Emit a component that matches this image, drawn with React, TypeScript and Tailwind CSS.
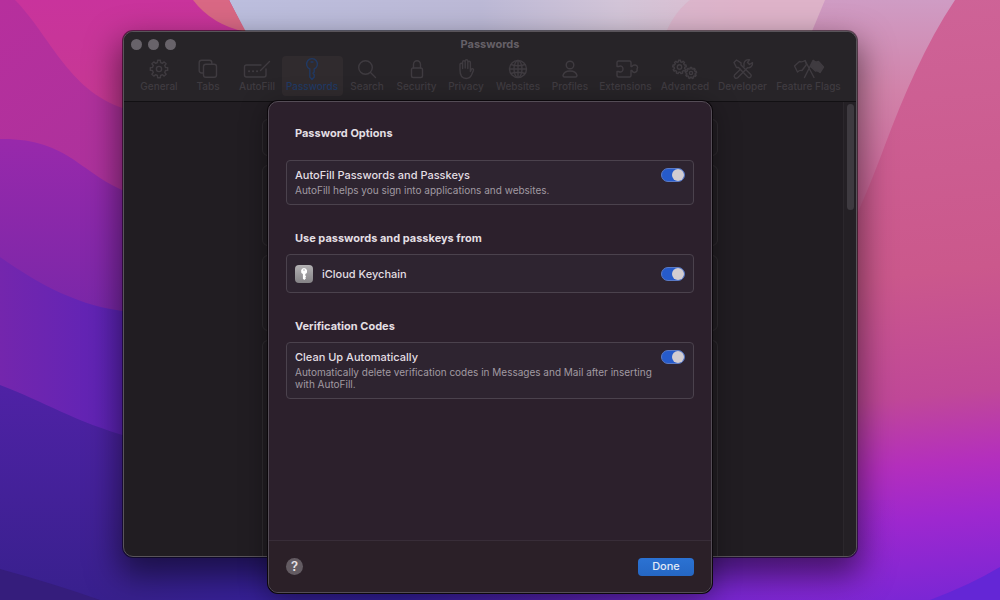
import React, { useState } from "react";

function gearPath(cx: number, cy: number, outer: number, inner: number, teeth: number) {
  const points: string[] = [];
  const step = (Math.PI * 2) / teeth;
  const at = (r: number, a: number) =>
    `${(cx + r * Math.cos(a)).toFixed(2)} ${(cy + r * Math.sin(a)).toFixed(2)}`;
  for (let i = 0; i < teeth; i++) {
    const a = i * step - Math.PI / 2;
    points.push(at(inner, a - step * 0.3), at(outer, a - step * 0.2), at(outer, a + step * 0.2), at(inner, a + step * 0.3));
  }
  return `M${points.join("L")}Z`;
}

const icons: Record<string, React.ReactNode> = {
  General: (
    <>
      <path d={gearPath(12, 11, 8.800, 6.700, 8)} />
      <circle cx="12" cy="11" r="2.6" />
    </>
  ),
  Tabs: (
    <>
      <path d="M7 15H5.500A2.300 2.300 0 0 1 3.200 12.700V4.500A2.300 2.300 0 0 1 5.500 2.200H13.500A2.300 2.300 0 0 1 15.800 4.500V6" />
      <rect x="7.500" y="6.300" width="13" height="13" rx="2.300" />
    </>
  ),
  AutoFill: (
    <>
      <path d="M16 7H1.500A2 2 0 0 0 -.5 9V17A2 2 0 0 0 1.500 19H19A2 2 0 0 0 21 17V11" />
      <path d="M15.500 12.500L24.500 3.500" />
      <path d="M4 13.300h.1M8 13.300h.1M12 13.300h.1" strokeWidth="2" />
    </>
  ),
  Passwords: (
    <>
      <path d="M9.800 11A5.400 5.400 0 1 1 14.200 11V14L13 15.300L14.200 16.700V19L12 21.500L9.800 19Z" />
      <path d="M11 4h2" />
    </>
  ),
  Search: (
    <>
      <circle cx="10.500" cy="9.500" r="6.800" />
      <path d="M15.500 14.500L20.500 19.500" />
    </>
  ),
  Security: (
    <>
      <rect x="6.500" y="10" width="11" height="9.500" rx="1.800" />
      <path d="M8.500 10V6.500A3.500 3.800 0 0 1 15.500 6.500V10" />
    </>
  ),
  Privacy: (
    <path d="M6 12V6.500a1.300 1.300 0 0 1 2.600 0V10.500V4a1.300 1.300 0 0 1 2.600 0V10V3a1.300 1.300 0 0 1 2.600 0V10.500V4.500a1.300 1.300 0 0 1 2.600 0V13.500L17.500 11a1.200 1.200 0 0 1 2 1.200L17.500 17a6 6 0 0 1-5.300 3.500C8 20.500 6 17.500 6 12Z" />
  ),
  Websites: (
    <>
      <circle cx="12" cy="11" r="8.500" />
      <ellipse cx="12" cy="11" rx="4" ry="8.500" />
      <path d="M12 2.500V19.500M3.500 11H20.500M5 6.500Q12 9 19 6.500M5 15.500Q12 13 19 15.500" />
    </>
  ),
  Profiles: (
    <>
      <circle cx="12" cy="7" r="3.800" />
      <path d="M6.500 19H17.500A1.500 1.500 0 0 0 19 17.500C18.300 14.600 15.500 13 12 13S5.700 14.600 5 17.500A1.500 1.500 0 0 0 6.500 19Z" />
    </>
  ),
  Extensions: (
    <path d="M4.500 3H15.500A1.500 1.500 0 0 1 17 4.500V8.500H18C18.600 7.300 19.500 7 20.500 7A2.500 2.500 0 0 1 23 11A2.500 2.500 0 0 1 18 12.500H17V17.500A1.500 1.500 0 0 1 15.500 19H4.500A1.500 1.500 0 0 1 3 17.500V13.500H4.500C7.500 15 9 13 9 11S7.500 7 4.500 8.500H3V4.500A1.500 1.500 0 0 1 4.500 3Z" />
  ),
  Advanced: (
    <>
      <path d={gearPath(6.500, 9, 6.800, 5.300, 9)} />
      <circle cx="6.500" cy="9" r="2.200" />
      <path d={gearPath(18, 15, 5.600, 4.300, 9)} />
      <circle cx="18" cy="15" r="1.600" />
    </>
  ),
  Developer: (
    <>
      <path d="M3 4.500L5.500 2L10 4.800V7L19.800 16.500A2 2 0 0 1 17 19.300L7.500 9.500H5.500Z" />
      <path d="M13 8.500V5.500A4.500 4.500 0 0 1 18.500 1.800L16.500 4.500L18.500 6.500L21.500 4.700A4.500 4.500 0 0 1 16.500 9.800L6.500 20A2.200 2.200 0 0 1 3.500 17L9.500 11.200" />
    </>
  ),
  "Feature Flags": (
    <>
      <path d="M-2.500 8L2.500 3.500Q5 4.500 8 2.500L9.500 6.500L5 12.500Q2.500 12 .5 14Z" />
      <path d="M8 2.500L17 19.500M16 2.500L7.500 19.500" />
      <path d="M16.500 2.500Q18.500 5 21.500 3.500L26.500 9L23 14.500Q20.500 12.500 18.500 13L13.500 8.500Z" fill="currentColor" />
    </>
  ),
};

const tabs = [
  { name: "General", width: "w-[49px]" },
  { name: "Tabs", width: "w-[49px]" },
  { name: "AutoFill", width: "w-[49px]" },
  { name: "Passwords", width: "w-[61px]" },
  { name: "Search", width: "w-[49px]" },
  { name: "Security", width: "w-[50px]" },
  { name: "Privacy", width: "w-[49px]" },
  { name: "Websites", width: "w-[55px]" },
  { name: "Profiles", width: "w-[49px]" },
  { name: "Extensions", width: "w-[62px]" },
  { name: "Advanced", width: "w-[57px]" },
  { name: "Developer", width: "w-[58px]" },
  { name: "Feature Flags", width: "w-[74px]" },
];

function Wallpaper() {
  return (
    <svg aria-hidden="true" className="absolute inset-0 h-full w-full" viewBox="0 0 1000 600" preserveAspectRatio="none">
      <defs>
        <linearGradient id="sky" x1="0" x2="1" y1="0" y2="0">
          <stop offset="0.2" stopColor="#bcbfdf" />
          <stop offset="0.48" stopColor="#bcb9d6" />
          <stop offset="0.62" stopColor="#d3c5d8" />
          <stop offset="0.75" stopColor="#dfbccf" />
        </linearGradient>
        <linearGradient id="lilac" x1="0" x2="0" y1="0" y2="1">
          <stop offset="0" stopColor="#cf9cc4" />
          <stop offset="0.3" stopColor="#d283aa" />
          <stop offset="1" stopColor="#c84c8a" />
        </linearGradient>
        <linearGradient id="rose" gradientUnits="userSpaceOnUse" x1="880" x2="940" y1="0" y2="610">
          <stop offset="0" stopColor="#ce6397" />
          <stop offset="0.45" stopColor="#cb588c" />
          <stop offset="0.65" stopColor="#c04898" />
          <stop offset="0.76" stopColor="#b42fbd" />
          <stop offset="0.85" stopColor="#9e28cf" />
          <stop offset="1" stopColor="#7626d5" />
        </linearGradient>
        <linearGradient id="magenta" x1="0" x2="0.6" y1="0" y2="1">
          <stop offset="0" stopColor="#b72f9d" />
          <stop offset="1" stopColor="#a5349b" />
        </linearGradient>
        <linearGradient id="hotpink" x1="0" x2="0" y1="0" y2="1">
          <stop offset="0" stopColor="#c9339c" />
          <stop offset="1" stopColor="#c63993" />
        </linearGradient>
        <linearGradient id="purple" x1="0" x2="0" y1="0" y2="1">
          <stop offset="0" stopColor="#9829ab" />
          <stop offset="1" stopColor="#7727a8" />
        </linearGradient>
        <linearGradient id="violet" x1="0" x2="1" y1="0" y2="0">
          <stop offset="0" stopColor="#7426ad" />
          <stop offset="1" stopColor="#5b23b8" />
        </linearGradient>
        <linearGradient id="indigo" x1="0" x2="0" y1="0" y2="1">
          <stop offset="0" stopColor="#4f22a5" />
          <stop offset="1" stopColor="#38208d" />
        </linearGradient>
        <linearGradient id="floor" x1="0" x2="1" y1="0" y2="0">
          <stop offset="0" stopColor="#37208c" />
          <stop offset="0.35" stopColor="#3420a0" />
          <stop offset="0.55" stopColor="#5522b0" />
          <stop offset="0.75" stopColor="#7627cf" />
          <stop offset="1" stopColor="#8426d3" stopOpacity="0" />
        </linearGradient>
      </defs>
      <rect width="1000" height="600" fill="url(#sky)" />
      <path d="M690 0Q672 14 663 40H830V0Z" fill="#dda9c3" opacity="0.5" />
      <path d="M825 0L800 60V300H1000V0Z" fill="url(#lilac)" />
      <path d="M955 0C925 45 904 95 885 145C872 180 862 205 840 250V400H700V600H1000V0Z" fill="url(#rose)" />
      <path d="M130 500H900V600H130Z" fill="url(#floor)" />
      <path d="M930 600Q970 585 1000 567V600Z" fill="#6426d6" />
      <path d="M0 0H229L262 65V320H0Z" fill="url(#magenta)" />
      <path d="M15 0C50 35 70 95 130 110H270L229 0Z" fill="url(#hotpink)" />
      <path d="M193 0Q212 25 246 32L229 0Z" fill="#d96884" />
      <path d="M0 139C70 138 80 175 130 193V330H0Z" fill="url(#purple)" />
      <path d="M0 257C40 285 80 307 130 312V450H0Z" fill="url(#violet)" />
      <path d="M0 385C45 402 75 422 130 437V600H0Z" fill="url(#indigo)" />
      <path d="M0 569Q55 584 100 600H0Z" fill="#351d7c" />
    </svg>
  );
}

function Toggle({ id }: { id: string }) {
  const [on, setOn] = useState(true);
  return (
    <input
      id={id}
      type="checkbox"
      role="switch"
      checked={on}
      onChange={(e) => setOn(e.target.checked)}
      className="flex h-[14px] w-6 shrink-0 appearance-none items-center rounded-full border border-[#5a79c4] bg-[#5a535c] before:block before:size-3 before:rounded-full before:bg-[#d2cdd1] checked:justify-end checked:bg-[#265bcb]"
    />
  );
}

const card = "rounded border border-[#4b424d] bg-[#2e2430] px-2";
const heading = "px-[9px] text-[11px] leading-4 font-bold text-[#e3dfe3]";
const title = "block text-[11px] leading-[14px] font-medium text-[#e3dfe3]";
const note = "mt-0.5 text-[10px] leading-3 text-[#a19aa2]";

function KeychainIcon() {
  return (
    <svg aria-hidden="true" viewBox="0 0 18 18" className="size-[18px] shrink-0">
      <defs>
        <linearGradient id="key-tile" x1="0" x2="0" y1="0" y2="1">
          <stop offset="0" stopColor="#b3b1b3" />
          <stop offset="1" stopColor="#858386" />
        </linearGradient>
      </defs>
      <rect width="18" height="18" rx="4" fill="url(#key-tile)" />
      <path
        fill="#fff"
        fillRule="evenodd"
        d="M9 3a3.200 3.200 0 0 1 1.300 6.100V10.500L11.200 11.400L10.300 12.300L11 13.200L9.300 15L7.900 13.800V9.100A3.200 3.200 0 0 1 9 3ZM9 4.200a.8.8 0 1 0 0 1.600a.8.8 0 1 0 0-1.600Z"
      />
    </svg>
  );
}

function Sheet() {
  return (
    <section
      role="dialog"
      aria-labelledby="sheet-title"
      className="absolute top-[69px] -bottom-[37px] left-1/2 flex w-[444px] -translate-x-1/2 flex-col overflow-hidden rounded-[10px] border border-[#544c56] bg-[#2c202c] shadow-[0_0_0_1px_#0c080c,0_6px_28px_rgba(0,0,0,0.4)]"
    >
      <div className="flex-1 px-[17px] pt-[23px]">
        <h2 id="sheet-title" className={heading}>Password Options</h2>
        <div className={`${card} mt-[19px] flex items-start justify-between pt-[7px] pb-2`}>
          <div>
            <label htmlFor="autofill" className={title}>AutoFill Passwords and Passkeys</label>
            <p className={note}>AutoFill helps you sign into applications and websites.</p>
          </div>
          <Toggle id="autofill" />
        </div>

        <h3 className={`${heading} mt-[25px]`}>Use passwords and passkeys from</h3>
        <div className={`${card} mt-2 flex h-[39px] items-center`}>
          <KeychainIcon />
          <label htmlFor="keychain" className={`${title} ml-[9px] flex-1`}>iCloud Keychain</label>
          <Toggle id="keychain" />
        </div>

        <h3 className={`${heading} mt-[25px]`}>Verification Codes</h3>
        <div className={`${card} mt-2 flex items-start justify-between pt-[7px] pb-2`}>
          <div className="max-w-[364px]">
            <label htmlFor="cleanup" className={title}>Clean Up Automatically</label>
            <p className={note}>
              Automatically delete verification codes in Messages and Mail after inserting with AutoFill.
            </p>
          </div>
          <Toggle id="cleanup" />
        </div>
      </div>
      <footer className="flex h-[52px] items-center justify-between border-t border-[#382d38] bg-[#2b2028] px-[17px]">
        <button type="button" aria-label="Help" className="flex size-[17px] items-center justify-center rounded-full bg-[#635b62] text-[13px] leading-none font-semibold text-[#e6e2e5]">
          ?
        </button>
        <button type="button" className="h-[18px] w-14 rounded bg-linear-to-b from-[#2b72d3] to-[#2567c4] text-[11px] leading-none font-medium text-[#e2eaf6]">
          Done
        </button>
      </footer>
    </section>
  );
}

export default function App() {
  return (
    <main className="relative flex min-h-screen flex-col overflow-hidden pt-[31px] pr-[143px] pb-[43px] pl-[123px] font-['Inter','Liberation_Sans',sans-serif]">
      <Wallpaper />
      <div className="relative flex flex-1 flex-col rounded-[10px] border border-[#59545a] bg-[#211d22] shadow-[0_0_0_1px_rgba(0,0,0,0.5),0_14px_32px_4px_rgba(0,0,0,0.5)]">
        <header className="rounded-t-[9px] border-b border-[#121013] bg-[#272428]">
          <div className="grid h-6 grid-cols-[1fr_auto_1fr] items-center px-[7px]">
            <div className="flex gap-1.5">
              <button type="button" aria-label="Close" className="size-[11px] rounded-full bg-[#68636a]" />
              <button type="button" aria-label="Minimize" className="size-[11px] rounded-full bg-[#68636a]" />
              <button type="button" aria-label="Zoom" className="size-[11px] rounded-full bg-[#68636a]" />
            </div>
            <h1 className="text-[11px] leading-4 font-bold text-[#656067]">Passwords</h1>
          </div>
          <nav className="flex justify-center pb-[5px]">
            {tabs.map((tab) => (
              <button
                key={tab.name}
                type="button"
                className={`${tab.width} flex h-10 flex-col items-center rounded pt-0.5 ${
                  tab.name === "Passwords" ? "bg-[#302b2e] text-[#203963]" : "text-[#3f3b40]"
                }`}
              >
                <svg
                  aria-hidden="true"
                  viewBox="0 0 24 24"
                  className="size-6 overflow-visible"
                  fill="none"
                  stroke="currentColor"
                  strokeWidth="1.4"
                  strokeLinecap="round"
                  strokeLinejoin="round"
                >
                  {icons[tab.name]}
                </svg>
                <span className="text-[10px] leading-2 font-medium whitespace-nowrap">{tab.name}</span>
              </button>
            ))}
          </nav>
        </header>
        <div className="flex flex-1">
          <div className="ml-3 flex flex-1 flex-col items-center pt-[17px]">
            <div className="flex w-[456px] flex-1 flex-col gap-[9px]">
              <div className="h-[37px] rounded-md border border-[#2f2b30]" />
              <div className="h-[81px] rounded-md border border-[#2f2b30]" />
              <div className="h-[76px] rounded-md border border-[#2f2b30]" />
              <div className="flex-1 rounded-t-md border border-b-0 border-[#2f2b30]" />
            </div>
          </div>
          <div className="w-[13px] rounded-br-[9px] border-l border-[#2b272c] bg-[#242025] pt-0.5 pl-[3px]">
            <div className="h-[106px] w-[7px] rounded-full bg-[#3e3a40]" />
          </div>
        </div>
        <Sheet />
      </div>
    </main>
  );
}
